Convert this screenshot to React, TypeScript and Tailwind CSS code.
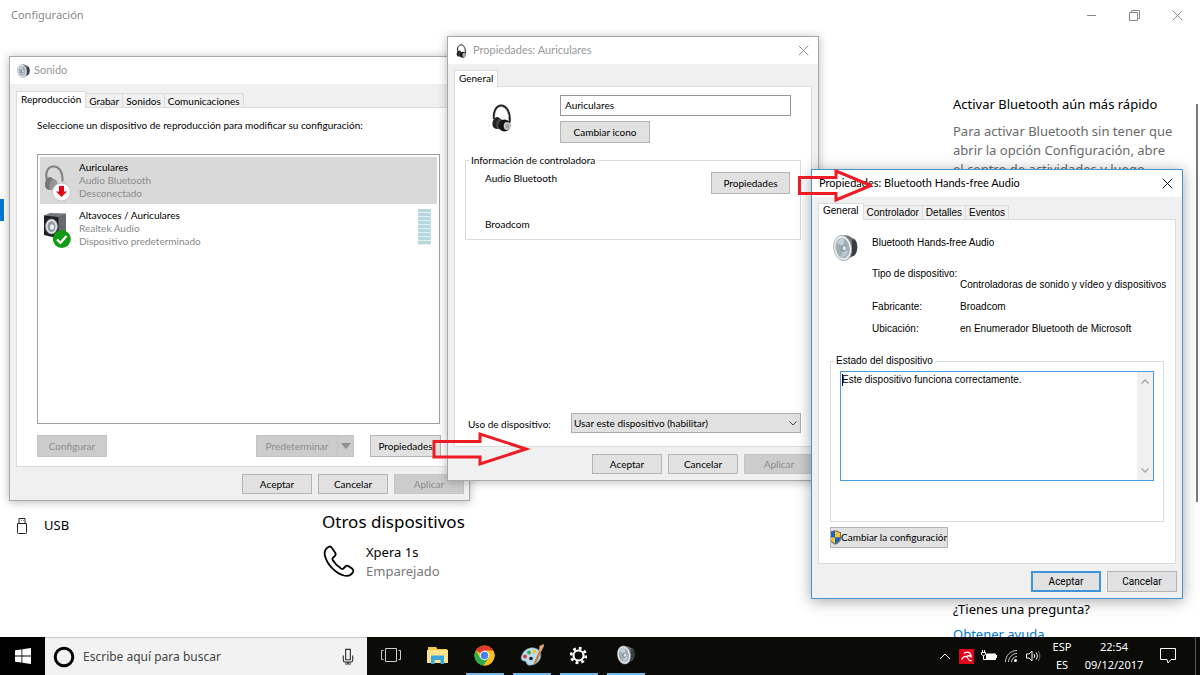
import type { ReactNode } from 'react';
import clsx from 'clsx';

interface TabsProps {
  tabs: string[];
}

function Tabs({ tabs }: TabsProps) {
  return (
    <div role="tablist" className="relative flex items-end">
      {tabs.map((tab, i) => (
        <button
          key={tab}
          type="button"
          role="tab"
          aria-selected={i === 0}
          className={clsx(
            'border border-b-0 border-[#dcdcdc] leading-3 whitespace-nowrap text-black',
            i === 0 ? '-mb-px h-[17px] bg-white px-1 pb-[2px]' : 'h-[14px] border-l-0 bg-[#f0f0f0] px-[3px]'
          )}
        >
          {tab}
        </button>
      ))}
    </div>
  );
}

interface PushButtonProps {
  children: ReactNode;
  disabled?: boolean;
  primary?: boolean;
  className?: string;
}

function PushButton({ children, disabled = false, primary = false, className }: PushButtonProps) {
  return (
    <button
      type="button"
      disabled={disabled}
      className={clsx(
        'flex items-center justify-center whitespace-nowrap',
        disabled
          ? 'border border-[#c4c4c4] bg-[#cccccc] text-[#8c8c8c]'
          : primary
          ? 'border-2 border-[#3f93dc] bg-[#e1e1e1] text-black'
          : 'border border-[#b4b4b4] bg-[#e1e1e1] text-black',
        className
      )}
    >
      {children}
    </button>
  );
}

function CloseIcon({ className }: { className?: string }) {
  return (
    <svg viewBox="0 0 12 12" className={clsx('size-[11px]', className)} fill="none" stroke="currentColor">
      <path d="M.8.8l10.4 10.4M11.2.8L.8 11.2" />
    </svg>
  );
}

function Headphones({ className }: { className?: string }) {
  return (
    <svg viewBox="0 0 20 28" className={className} fill="none">
      <path d="M2 15C1 8 4 1.500 9 1.500c6 0 10 8 8.500 17" stroke="#222" strokeWidth="2" />
      <path d="M2.600 14C2.500 8 5 2.800 9 2.800c5 0 8 6 7.600 14" stroke="#777" strokeWidth=".5" />
      <ellipse cx="4.800" cy="19" rx="4.300" ry="6" fill="#222" transform="rotate(12 4.800 19)" />
      <ellipse cx="7.500" cy="20" rx="3.300" ry="5.300" fill="#444" transform="rotate(12 7.500 20)" />
      <ellipse cx="12.500" cy="21.500" rx="6" ry="6" fill="#151515" />
      <ellipse cx="15" cy="22" rx="3.300" ry="4" fill="#c9c9c9" />
      <ellipse cx="15.300" cy="22" rx="1.900" ry="2.600" fill="#a2a2a2" />
    </svg>
  );
}

function SpeakerCone({ className }: { className?: string }) {
  return (
    <svg viewBox="0 0 26 28" className={className}>
      <path d="M10 1c4-.5 7 .5 9 2l4 2c2 3 2.500 6 2.300 9-.3 4-1.300 6-3.300 8l-4 2c-2 2-4 3-6 3z" fill="#6d7174" />
      <path d="M20 5l3.500 1.500c1.500 3 1.800 6 1.500 8.500-.3 3-1.200 5-3 6.500L19 23z" fill="#3a3d3f" />
      <ellipse cx="10" cy="14" rx="9.300" ry="13.200" fill="#eceff1" stroke="#9fa5a8" strokeWidth=".8" transform="rotate(-9 10 14)" />
      <ellipse cx="10" cy="14" rx="7.200" ry="10.800" fill="#9fadb5" transform="rotate(-9 10 14)" />
      <path d="M4 9c1.500-4 5-6 7.500-5.500L11 12z" fill="#c3d0d7" />
      <path d="M7.500 24c3.500 1 7-2 8.500-7l-5-1z" fill="#bccbd3" />
      <ellipse cx="11" cy="14.500" rx="2.600" ry="3.400" fill="#7d8b94" />
      <ellipse cx="11.600" cy="14.200" rx="1.800" ry="2.400" fill="#dfe7eb" />
    </svg>
  );
}

function HeadphonesDevice() {
  return (
    <svg viewBox="0 0 28 38" className="h-[38px] w-7" fill="none">
      <path d="M3 15C1 9 3 2 9 1.500c7-.5 10 7 9.500 15" stroke="#808080" strokeWidth="2" />
      <ellipse cx="5.500" cy="18.500" rx="4.500" ry="6.500" fill="#777" transform="rotate(12 5.500 18.500)" />
      <ellipse cx="9.500" cy="20" rx="4" ry="6" fill="#959595" transform="rotate(12 9.500 20)" />
      <circle cx="17.500" cy="27" r="9" fill="#fff" stroke="#c4c4c4" />
      <path d="M15 21h5v5.500h3L17.500 32 12 26.500h3z" fill="#e30613" />
    </svg>
  );
}

function SpeakerDevice() {
  return (
    <svg viewBox="0 0 28 36" className="h-9 w-7">
      <path d="M0 2.500L6 0l16 .5V21l-6 4z" fill="#777b80" />
      <path d="M14 4l8-3.500V21l-8 4z" fill="#66696e" />
      <path d="M0 2.500L14.500 4v21.500L0 22z" fill="#202124" />
      <ellipse cx="7.500" cy="13.500" rx="6" ry="7.500" fill="#e4e8ea" stroke="#85898c" strokeWidth=".7" />
      <ellipse cx="7.500" cy="13.500" rx="4" ry="5.500" fill="#929da3" />
      <ellipse cx="8" cy="14" rx="2" ry="2.700" fill="#eef2f4" />
      <circle cx="17.800" cy="26" r="9" fill="#129b17" />
      <path d="M13 26.500l3.500 3.300 6-6.800" stroke="#fff" strokeWidth="2.200" fill="none" />
    </svg>
  );
}

function Shield() {
  return (
    <svg viewBox="0 0 12 16" className="-ml-px h-[15px] w-[11px] shrink-0">
      <path d="M5.500 0L12 2.200v6.300c0 3.500-3 6-6.500 7.500C2 14 0 12 0 8.500V1.500z" fill="#666" />
      <path d="M5.500 1.300V8H0V2.500z" fill="#1466cc" />
      <path d="M5.500 1.300L11 3v5H5.500z" fill="#fdc52c" />
      <path d="M0 8h5.500v6.500C2 13 0 11 0 8z" fill="#fdc52c" />
      <path d="M5.500 8H11c0 3-2.500 5.200-5.500 6.500z" fill="#1466cc" />
    </svg>
  );
}

interface DialogProps {
  title: string;
  icon?: ReactNode;
  active?: boolean;
  closable?: boolean;
  className: string;
  children: ReactNode;
}

function Dialog({ title, icon, active = false, closable = true, className, children }: DialogProps) {
  return (
    <section
      aria-label={title}
      className={clsx(
        "absolute flex flex-col border bg-[#f0f0f0] font-['Lato','Segoe_UI',sans-serif] text-[10px] text-black",
        active
          ? 'border-[#4595d1] shadow-[0_2px_14px_rgba(0,0,0,0.35)]'
          : 'border-[#a8a8a8] shadow-[0_1px_9px_rgba(0,0,0,0.28)]',
        className
      )}
    >
      <header className="flex h-[27px] items-center gap-1 bg-white pr-[9px] pl-[7px]">
        {icon}
        <h2 className={clsx('flex-1 text-[11px]', active ? 'text-black' : 'text-[#999]')}>{title}</h2>
        {closable && (
          <button type="button" aria-label="Cerrar" className={active ? 'text-black' : 'text-[#888]'}>
            <CloseIcon />
          </button>
        )}
      </header>
      {children}
    </section>
  );
}

function SoundDialog() {
  return (
    <Dialog
      title="Sonido"
      closable={false}
      icon={<SpeakerCone className="h-[14px] w-[13px]" />}
      className="top-[56px] left-[9px] w-[461px]"
    >
      <div className="px-1.5 pt-[7px]">
        <Tabs tabs={['Reproducción', 'Grabar', 'Sonidos', 'Comunicaciones']} />
        <div className="border border-[#dcdcdc] bg-white px-5 pt-[9px] pb-[9px]">
          <p className="leading-4">Seleccione un dispositivo de reproducción para modificar su configuración:</p>
          <ul className="mt-[21px] mr-[2px] h-[270px] border border-[#9b9fa6] p-[2px]">
            <li className="flex h-[47px] items-start bg-[#d9d9d9] pt-1">
              <div className="mt-1 ml-1 w-[35px]">
                <HeadphonesDevice />
              </div>
              <div className="leading-[13px] text-[#8a8a8a]">
                <p className="text-black">Auriculares</p>
                <p>Audio Bluetooth</p>
                <p>Desconectado</p>
              </div>
            </li>
            <li className="flex h-[48px] items-start pt-[5px]">
              <div className="mt-1 ml-1 w-[35px]">
                <SpeakerDevice />
              </div>
              <div className="flex-1 leading-[13px] text-[#8a8a8a]">
                <p className="text-black">Altavoces / Auriculares</p>
                <p>Realtek Audio</p>
                <p>Dispositivo predeterminado</p>
              </div>
              <div className="mr-[6px] flex w-[13px] flex-col">
                {Array.from({ length: 9 }, (_, i) => (
                  <span key={i} className="h-1 border-b border-[#e2f1f4] bg-[#b9d8de]" />
                ))}
              </div>
            </li>
          </ul>
          <div className="mt-[11px] mr-px flex">
            <PushButton disabled className="h-[22px] w-[70px]">Configurar</PushButton>
            <PushButton disabled className="ml-auto h-[22px] w-[82px]">Predeterminar</PushButton>
            <button type="button" disabled aria-label="Más opciones" className="flex w-4 items-center justify-center border border-l-0 border-[#c4c4c4] bg-[#ccc]">
              <svg viewBox="0 0 10 6" className="w-[10px]">
                <path d="M0 0h10L5 6z" fill="#8e8e8e" />
              </svg>
            </button>
            <PushButton className="ml-4 h-[22px] w-[71px]">Propiedades</PushButton>
          </div>
        </div>
      </div>
      <footer className="flex justify-end gap-[6px] px-[5px] pt-[7px] pb-[6px]">
        <PushButton className="h-5 w-[70px]">Aceptar</PushButton>
        <PushButton className="h-5 w-[70px]">Cancelar</PushButton>
        <PushButton disabled className="h-5 w-[70px]">Aplicar</PushButton>
      </footer>
    </Dialog>
  );
}

function HeadphonesDialog() {
  return (
    <Dialog
      title="Propiedades: Auriculares"
      icon={<Headphones className="mr-[2px] ml-px h-[14px] w-[11px]" />}
      className="top-[36px] left-[447px] w-[372px]"
    >
      <div className="px-1.5 pt-1.5">
        <Tabs tabs={['General']} />
        <div className="flex h-[361px] flex-col border border-[#dcdcdc] bg-white px-[10px] pt-2">
          <div className="flex">
            <Headphones className="mt-[9px] ml-[27px] h-7 w-5" />
            <div className="ml-[48px] flex-1">
              <input
                type="text"
                aria-label="Nombre"
                defaultValue="Auriculares"
                className="block h-[21px] w-[231px] border border-[#999] bg-white px-1 pb-[2px] outline-none"
              />
              <PushButton className="mt-[5px] h-[22px] w-[90px]">Cambiar icono</PushButton>
            </div>
          </div>
          <fieldset className="mt-[9px] border border-[#dcdcdc]">
            <legend className="ml-[3px] px-[2px] leading-4">Información de controladora</legend>
            <div className="flex h-[71px] justify-between pr-[10px] pl-[19px]">
              <div className="flex flex-col gap-[30px] pt-[2px] leading-4">
                <p>Audio Bluetooth</p>
                <p>Broadcom</p>
              </div>
              <PushButton className="mt-1 h-[22px] w-[79px]">Propiedades</PushButton>
            </div>
          </fieldset>
          <div className="mt-auto mb-[13px] flex items-center">
            <label htmlFor="uso" className="w-[106px] pt-[2px] pl-[3px]">Uso de dispositivo:</label>
            <div className="relative flex-1">
              <select
                id="uso"
                className="block h-5 w-full appearance-none border border-[#adadad] bg-[#e1e1e1] px-[2px] text-black"
              >
                <option>Usar este dispositivo (habilitar)</option>
              </select>
              <svg viewBox="0 0 8 5" className="pointer-events-none absolute top-2 right-1 w-2" fill="none" stroke="#444">
                <path d="M.5.5L4 4 7.500.5" />
              </svg>
            </div>
          </div>
        </div>
      </div>
      <footer className="flex justify-end gap-[6px] px-1 pt-[7px] pb-[6px]">
        <PushButton className="h-5 w-[70px]">Aceptar</PushButton>
        <PushButton className="h-5 w-[70px]">Cancelar</PushButton>
        <PushButton disabled className="h-5 w-[70px]">Aplicar</PushButton>
      </footer>
    </Dialog>
  );
}

function BluetoothDialog() {
  return (
    <Dialog
      active
      title="Propiedades: Bluetooth Hands-free Audio"
      className="top-[169px] left-[811px] w-[372px]"
    >
      <div className="px-1.5 pt-1.5 font-['Liberation_Sans',Arial,sans-serif]">
        <Tabs tabs={['General', 'Controlador', 'Detalles', 'Eventos']} />
        <div className="border border-[#dcdcdc] bg-white px-[11px] pt-[14px] pb-[15px]">
          <div className="flex gap-[14px] pl-[3px]">
            <SpeakerCone className="h-7 w-[25px]" />
            <p className="leading-[18px]">Bluetooth Hands-free Audio</p>
          </div>
          <dl className="mt-1 grid grid-cols-[88px_1fr] pl-[42px] leading-4">
            <dt>Tipo de dispositivo:</dt>
            <dd className="-mr-1 overflow-hidden pt-[11px] whitespace-nowrap">
              Controladoras de sonido y vídeo y dispositivos de juego
            </dd>
            <dt className="mt-1.5">Fabricante:</dt>
            <dd className="mt-1.5">Broadcom</dd>
            <dt className="mt-1.5">Ubicación:</dt>
            <dd className="mt-1.5">en Enumerador Bluetooth de Microsoft</dd>
          </dl>
          <fieldset className="mt-4 border border-[#dcdcdc] px-[9px] pb-10">
            <legend className="-ml-[6px] px-[2px] leading-4">
              <label htmlFor="estado">Estado del dispositivo</label>
            </legend>
            <div className="relative mt-[2px] flex h-[110px] border border-[#4a9be0] bg-white">
              <span className="absolute top-[2px] left-px h-3 w-px bg-black" />
              <textarea
                id="estado"
                readOnly
                defaultValue="Este dispositivo funciona correctamente."
                className="flex-1 resize-none overflow-hidden px-px leading-4 outline-none"
              />
              <div className="flex w-4 flex-col items-center justify-between bg-[#f0f0f0] py-[7px]">
                <svg viewBox="0 0 8 5" className="w-2" fill="none" stroke="#aaa" strokeWidth="1.500">
                  <path d="M.5 4.500L4 1l3.500 3.500" />
                </svg>
                <svg viewBox="0 0 8 5" className="w-2" fill="none" stroke="#aaa" strokeWidth="1.500">
                  <path d="M.5.5L4 4 7.500.5" />
                </svg>
              </div>
            </div>
          </fieldset>
          <button
            type="button"
            className="mt-[5px] flex h-[21px] w-[118px] items-center overflow-hidden border border-[#b4b4b4] bg-[#e1e1e1] font-['Lato',sans-serif] whitespace-nowrap"
          >
            <Shield />
            Cambiar la configuración
          </button>
        </div>
      </div>
      <footer className="flex justify-end gap-[6px] px-[5px] pt-[7px] pb-[6px] font-['Roboto',sans-serif]">
        <PushButton primary className="h-[21px] w-[70px]">Aceptar</PushButton>
        <PushButton className="h-[21px] w-[70px]">Cancelar</PushButton>
      </footer>
    </Dialog>
  );
}

function SettingsPage() {
  return (
    <div className="flex flex-1 flex-col">
      <header className="flex h-[31px] shrink-0 items-center pr-[17px] pl-[11px] text-[#888]">
        <h1 className="flex-1 text-[11px]">Configuración</h1>
        <div className="flex items-center gap-8">
          <button type="button" aria-label="Minimizar">
            <svg viewBox="0 0 11 11" className="size-[11px]" stroke="currentColor">
              <path d="M1 5.500h9" />
            </svg>
          </button>
          <button type="button" aria-label="Restaurar">
            <svg viewBox="0 0 11 11" className="size-[11px]" fill="none" stroke="currentColor">
              <path d="M.5 2.500h8v8h-8zM2.500 2.500v-2h8v8h-2" />
            </svg>
          </button>
          <button type="button" aria-label="Cerrar">
            <CloseIcon />
          </button>
        </div>
      </header>
      <div className="flex flex-1 text-[13px] leading-[19px]">
        <nav className="w-[322px] pt-[168px]">
          <div className="h-[22px] w-1 bg-[#0078d7]" />
          <a href="#usb" className="mt-[295px] flex items-center gap-[15px] pl-[15px]">
            <svg viewBox="0 0 14 18" className="h-[18px] w-[14px]" fill="none" stroke="#222">
              <path d="M2.500 6.500h9v9a1 1 0 01-1 1h-7a1 1 0 01-1-1zM4 6.500v-5h6v5M6 3.500h.5M8 3.500h.5" />
            </svg>
            USB
          </a>
        </nav>
        <main className="flex-1 pt-[479px]">
          <h2 className="text-[17px] leading-6">Otros dispositivos</h2>
          <div className="mt-[9px] flex gap-[10px]">
            <svg viewBox="0 0 34 34" className="mt-px size-[34px]" fill="none" stroke="#000" strokeWidth="1.800">
              <path d="M6.500 3C3 5 2 8 3 12c2 8 10 17 19 19.500 4 1 7 0 9-3.500.7-1.300.3-2.300-.7-3.200l-3.600-2.600c-1.200-.8-2.300-.7-3.300.3l-2 2c-.8.7-1.500.5-2.300 0-3.500-2.300-6.600-5.300-8.400-8.500-.4-.8-.4-1.400.2-2.100l2-1.900c1-1.100 1-2.100.3-3.300L9.800 3.800C9 2.500 7.800 2.200 6.500 3z" />
            </svg>
            <div>
              <p>Xpera 1s</p>
              <p className="text-[#777]">Emparejado</p>
            </div>
          </div>
        </main>
        <aside className="w-[243px] pt-[64px]">
          <h3>Activar Bluetooth aún más rápido</h3>
          <p className="mt-2 w-[224px] text-[#6a6a6a]">
            Para activar Bluetooth sin tener que abrir la opción Configuración, abre el centro de actividades y luego
          </p>
          <h3 className="mt-[421px]">¿Tienes una pregunta?</h3>
          <a href="#ayuda" className="mt-[6px] block text-[#0078d7]">Obtener ayuda</a>
        </aside>
        <div className="mt-[73px] mr-[2px] h-[398px] w-[2px] bg-[#7a7a7a]" />
      </div>
    </div>
  );
}

function TaskButton({ label, running = false, children }: { label: string; running?: boolean; children: ReactNode }) {
  return (
    <button type="button" aria-label={label} className="flex w-[47px] flex-col items-center">
      <span className="flex flex-1 items-center">{children}</span>
      <span className={clsx('h-[2px] w-[38px]', running && 'bg-[#76b9ed]')} />
    </button>
  );
}

function Taskbar() {
  return (
    <footer className="relative flex h-[38px] shrink-0 bg-[#0b0c08] text-white">
      <button type="button" aria-label="Inicio" className="flex w-[45px] items-center justify-center bg-black">
        <svg viewBox="0 0 16 16" className="size-4" fill="#fff">
          <path d="M0 2.300L6.500 1.400v6.200H0zM7.300 1.300L16 0v7.600H7.300zM0 8.400h6.500v6.200L0 13.700zM7.300 8.400H16V16l-8.700-1.300z" />
        </svg>
      </button>
      <div className="flex w-[322px] items-center border-t border-[#ccc] bg-[#f2f2f2] pr-3 pl-2 text-[#333]">
        <svg viewBox="0 0 22 22" className="size-[22px] shrink-0" fill="none" stroke="#000" strokeWidth="3">
          <circle cx="11" cy="11" r="8.800" />
        </svg>
        <input
          type="text"
          aria-label="Buscar"
          placeholder="Escribe aquí para buscar"
          className="min-w-0 flex-1 px-2 text-[12px] outline-none placeholder:text-[#444]"
        />
        <svg viewBox="0 0 14 18" className="h-[17px] w-[14px]" fill="none" stroke="#333" strokeWidth="1.200">
          <path d="M4.500 1.500h5v11h-5zM2 8v5c0 1.500 1 2 2 2h6c1 0 2-.5 2-2V8M7 15v2M4 17h6" />
        </svg>
      </div>
      <TaskButton label="Vista de tareas">
        <svg viewBox="0 0 20 14" className="h-[14px] w-5" fill="none" stroke="#ccc">
          <path d="M4.500.5h11v13h-11zM2.500 2.500h-2v9h2M17.500 2.500h2v9h-2" />
        </svg>
      </TaskButton>
      <TaskButton label="Explorador de archivos">
        <svg viewBox="0 0 21 18" className="h-[18px] w-[21px]">
          <path d="M1 1h8l1.500 2H20v5H1z" fill="#f5c94c" />
          <path d="M0 4h21v13H0z" fill="#fde38f" />
          <path d="M4 9.500h13V18h-3.500v-4h-6v4H4z" fill="#37a9df" />
        </svg>
      </TaskButton>
      <TaskButton label="Chrome" running>
        <svg viewBox="0 0 22 22" className="size-[21px]">
          <circle cx="11" cy="11" r="10.500" fill="#fbc116" />
          <path d="M11 11L1.900 5.700A10.500 10.500 0 0120.100 5.800z" fill="#e33b2e" />
          <path d="M1.900 5.700A10.500 10.500 0 0010 21.500l5.500-8L11 11 6.500 13.500z" fill="#2da94f" />
          <path d="M11 5.800h9.100A10.500 10.500 0 0110 21.500l5.500-8z" fill="#fbc116" />
          <circle cx="11" cy="11" r="5" fill="#fff" />
          <circle cx="11" cy="11" r="4" fill="#4285f4" />
        </svg>
      </TaskButton>
      <TaskButton label="Paint" running>
        <svg viewBox="0 0 24 22" className="h-[22px] w-6">
          <path d="M2 11C4 6 9 3 14 4c6 1 8 6 6 11-2 4-7 7-12 6-2-1-1-3-3-4-3 0-5-2-3-6z" fill="#b9dcf0" stroke="#719fbd" strokeWidth=".6" />
          <circle cx="11" cy="14.500" r="1.800" fill="#141a1c" />
          <circle cx="5" cy="12.500" r="2" fill="#dc3e36" />
          <circle cx="9" cy="8.500" r="2" fill="#43a847" />
          <circle cx="14.500" cy="7.500" r="2" fill="#f5c330" />
          <path d="M13.500 21c.5-4 3-7 5.500-14l2 1c-2 5-3.500 10-7.500 13z" fill="#cf7a33" />
          <path d="M19 7l.5-5 4-2 .5 2-3 6z" fill="#dba878" />
        </svg>
      </TaskButton>
      <TaskButton label="Configuración" running>
        <svg viewBox="0 0 20 20" className="size-[19px]" fill="none" stroke="#fff">
          <circle cx="10" cy="10" r="5.300" strokeWidth="2.200" />
          <circle cx="10" cy="10" r="7.700" strokeWidth="2.800" strokeDasharray="3 3.050" />
        </svg>
      </TaskButton>
      <TaskButton label="Sonido" running>
        <SpeakerCone className="h-5 w-[18px]" />
      </TaskButton>
      <div className="ml-auto flex items-center pr-1 text-center text-[11px] leading-[18px]">
        <svg viewBox="0 0 12 8" className="mr-2 w-3" fill="none" stroke="#fff">
          <path d="M1 7l5-5 5 5" />
        </svg>
        <svg viewBox="0 0 15 15" className="mr-[7px] size-[15px]" fill="none">
          <path d="M0 0h15v15H0z" fill="#e2001a" />
          <path d="M2.500 10.500C4 8 5.500 7 7.500 7.500c1.800-1 3.500-.8 4.500.2C12.300 5 10.500 3.200 8 3.200c-1.200 0-2.200.4-3 1.300M8 8l2 3c.7 1 2 1 2.500 0" stroke="#fff" strokeWidth="1.300" />
        </svg>
        <svg viewBox="0 0 16 12" className="mr-[7px] w-4" fill="none" stroke="#fff">
          <path d="M5.500 4h9v5.500h-9z" fill="#fff" />
          <path d="M15.500 5v3M1.500 0v2M3.500 0v2M.5 2.500h4v1.500c0 1-1 1.500-2 1.500s-2-.5-2-1.500zM2.500 6v3.500h4" />
        </svg>
        <svg viewBox="0 0 14 14" className="mr-2 size-[14px]" fill="none" stroke="#ccc">
          <path d="M1.500 13C1.500 6.500 6.500 1.500 13 1.500M4.500 13c0-4.500 4-8.500 8.500-8.500M7.500 13c0-3 2.500-5.500 5.500-5.500" />
          <circle cx="11.500" cy="11.500" r="1.500" fill="#fff" stroke="none" />
        </svg>
        <svg viewBox="0 0 15 12" className="mr-[11px] w-[15px]" fill="none" stroke="#fff">
          <path d="M.5 4h2.500l3-3v10L3 8H.5z" />
          <path d="M8 4.200c.8 1 .8 2.600 0 3.600M10 2.500c1.800 2 1.800 5 0 7" />
          <path d="M12 1c2.500 3 2.500 7 0 10" stroke="#777" />
        </svg>
        <p className="w-[20px]">ESP<br />ES</p>
        <p className="ml-[10px] w-[64px]">22:54<br />09/12/2017</p>
        <svg viewBox="0 0 17 16" className="mr-[18px] ml-[14px] h-4 w-[17px]" fill="none" stroke="#fff">
          <path d="M.5.5h15v11H11L8 15l-1-3.500H.5z" />
        </svg>
        <span className="h-[38px] w-px bg-[#555]" />
      </div>
    </footer>
  );
}

export default function App() {
  return (
    <div className="relative flex h-screen flex-col overflow-hidden bg-white font-['Noto_Sans','Segoe_UI',sans-serif] text-black">
      <div className="flex min-h-0 flex-1 overflow-hidden">
        <SettingsPage />
      </div>
      <SoundDialog />
      <HeadphonesDialog />
      <BluetoothDialog />
      {/* red arrows that link one dialog to the next */}
      <svg
        viewBox="0 0 440 300"
        className="pointer-events-none absolute top-[168px] left-[432px] h-[300px] w-[440px]"
        fill="none"
        stroke="#ed1c24"
        strokeWidth="3"
      >
        <path d="M2 273.500h46v-7.500L94 281l-46 15v-7H2z" />
        <path d="M367.500 9.500H404V3l35 14.500L404 32v-6.500h-36.500z" />
      </svg>
      <Taskbar />
    </div>
  );
}
